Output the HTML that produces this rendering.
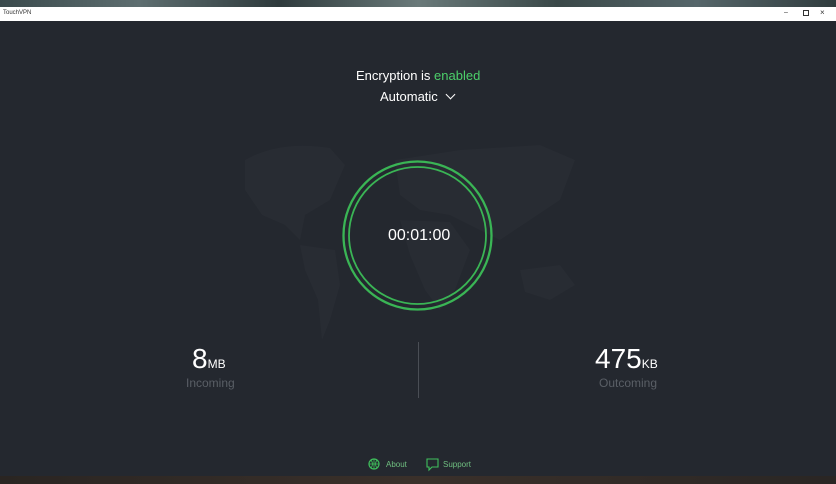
<!DOCTYPE html>
<html><head><style>
body{margin:0;width:836px;height:484px;overflow:hidden;background:#24282f;font-family:"Liberation Sans",sans-serif;position:relative}
.top{position:absolute;left:0;top:0;width:836px;height:7px;background:linear-gradient(90deg,#3a4a4c,#5e6e70,#2e3a3c,#6a7a7a,#3a4848,#56666a,#303c3e)}
.tb{position:absolute;left:0;top:7px;width:836px;height:14px;background:#fff;font-size:6px;color:#333}
.bot{position:absolute;left:0;top:476px;width:836px;height:8px;background:linear-gradient(90deg,#2a2522,#3a302a,#2a2624)}
.t{position:absolute;color:#fff;white-space:nowrap}
</style></head><body>
<div class="top"></div>
<div class="tb"><span style="position:absolute;left:3px;top:3px">TouchVPN</span>
<span style="position:absolute;left:784px;top:2px;font-size:7px">–</span>
<span style="position:absolute;left:803px;top:3px;width:4px;height:4px;border:1px solid #333"></span>
<span style="position:absolute;left:820px;top:1px;font-size:8px">×</span></div>
<svg style="position:absolute;left:0;top:0" width="836" height="484">
<g fill="#282c33">
<path d="M245 160 Q280 140 330 148 L345 165 L330 200 L305 215 L300 240 L285 225 L262 215 L245 190Z"/>
<path d="M300 245 L335 250 L340 285 L330 320 L322 340 L318 300 L305 270Z"/>
<path d="M395 160 L460 150 L540 145 L575 160 L560 200 L530 220 L500 240 L480 230 L450 215 L420 210 L400 195Z"/>
<path d="M400 220 L450 222 L470 250 L455 290 L440 310 L425 290 L410 255Z"/>
<path d="M520 270 L560 265 L575 285 L550 300 L525 292Z"/>
</g>
<circle cx="417.5" cy="235.5" r="74" fill="none" stroke="#3ab555" stroke-width="2.3"/>
<circle cx="417.5" cy="235.5" r="68.5" fill="none" stroke="#3ab555" stroke-width="1.8"/>
<line x1="418.5" y1="342" x2="418.5" y2="398" stroke="#4a4e55" stroke-width="1"/>
<circle cx="374" cy="464" r="5" fill="none" stroke="#3fbf5c" stroke-width="1.2"/>
<path d="M369 464h10M374 459v10M371 460q3 4 0 8M377 460q-3 4 0 8" stroke="#3fbf5c" stroke-width=".8" fill="none"/>
<path d="M427 459h11v8h-6l-3 3v-3h-2z" fill="none" stroke="#3fbf5c" stroke-width="1.1"/>
</svg>
<div class="t" style="left:356px;top:68px;font-size:13px">Encryption is <span style="color:#4cd06a">enabled</span></div>
<div class="t" style="left:380px;top:89px;font-size:13px">Automatic <span style="display:inline-block;width:6px;height:6px;border-right:1.3px solid #fff;border-bottom:1.3px solid #fff;transform:rotate(45deg);margin-left:6px;position:relative;top:-3px"></span></div>
<div class="t" style="left:388px;top:227px;font-size:16px">00:01:00</div>
<div class="t" style="left:192px;top:343px;font-size:28px">8<span style="font-size:12px">MB</span></div>
<div class="t" style="left:186px;top:376px;font-size:12px;color:#5a5f66">Incoming</div>
<div class="t" style="left:595px;top:343px;font-size:28px">475<span style="font-size:12px">KB</span></div>
<div class="t" style="left:599px;top:376px;font-size:12px;color:#5a5f66">Outcoming</div>
<div class="t" style="left:386px;top:460px;font-size:8px;color:#6fbf80">About</div>
<div class="t" style="left:443px;top:460px;font-size:8px;color:#6fbf80">Support</div>
<div class="bot"></div>
</body></html>
